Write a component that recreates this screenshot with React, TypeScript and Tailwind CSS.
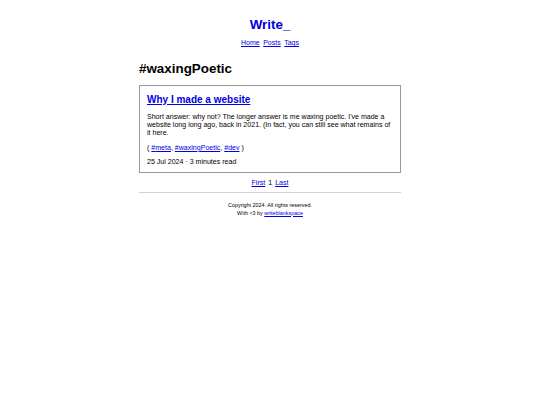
import React from 'react';

const posts = [
  {
    title: 'Why I made a website',
    excerpt:
      "Short answer: why not? The longer answer is me waxing poetic. I've made a website long long ago, back in 2021. (In fact, you can still see what remains of it here.",
    tags: ['meta', 'waxingPoetic', 'dev'],
    date: '25 Jul 2024',
    readTime: '3 minutes read',
  },
];

export default function App() {
  return (
    <div className="min-h-screen bg-white text-black font-['Liberation_Sans',Arial,sans-serif] text-[7.05px] leading-[1.2]">
      <div className="w-[262px] mx-auto pt-[17px]">
        <header className="text-center">
          <a href="#" className="text-[13.4px] font-bold text-[#0000e0] no-underline block">
            Write_
          </a>
          <nav className="mt-[6px] flex justify-center gap-[3.5px] text-[7px]">
            <a href="#" className="text-[#0000e0] underline">Home</a>
            <a href="#" className="text-[#0000e0] underline">Posts</a>
            <a href="#" className="text-[#0000e0] underline">Tags</a>
          </nav>
        </header>

        <main className="mt-[14px]">
          <h1 className="text-[13.4px] font-bold">#waxingPoetic</h1>

          {posts.map((post) => (
            <article
              key={post.title}
              className="mt-[7px] border border-[#9a9a9a] px-[7px] pt-[8px] pb-[5px]"
            >
              <h2 className="text-[10px] font-bold">
                <a href="#" className="text-[#0000e0] underline">{post.title}</a>
              </h2>
              <p className="mt-[7px]">{post.excerpt}</p>
              <p className="mt-[6px]">
                ({' '}
                {post.tags.map((tag, i) => (
                  <React.Fragment key={tag}>
                    <a href="#" className="text-[#0000e0] underline">#{tag}</a>
                    {i < post.tags.length - 1 ? ', ' : ''}
                  </React.Fragment>
                ))}{' '}
                )
              </p>
              <p className="mt-[6px]">
                {post.date} · {post.readTime}
              </p>
            </article>
          ))}

          <div className="mt-[6px] flex justify-center gap-[3px]">
            <a href="#" className="text-[#0000e0] underline">First</a>
            <span>1</span>
            <a href="#" className="text-[#0000e0] underline">Last</a>
          </div>
        </main>

        <hr className="mt-[5px] border-0 border-t border-[#d4d4d4]" />

        <footer className="mt-[9px] text-center text-[5.4px] leading-[1.35]">
          <p>Copyright 2024. All rights reserved.</p>
          <p>
            With &lt;3 by <a href="#" className="text-[#0000e0] underline">writeblankspace</a>
          </p>
        </footer>
      </div>
    </div>
  );
}
